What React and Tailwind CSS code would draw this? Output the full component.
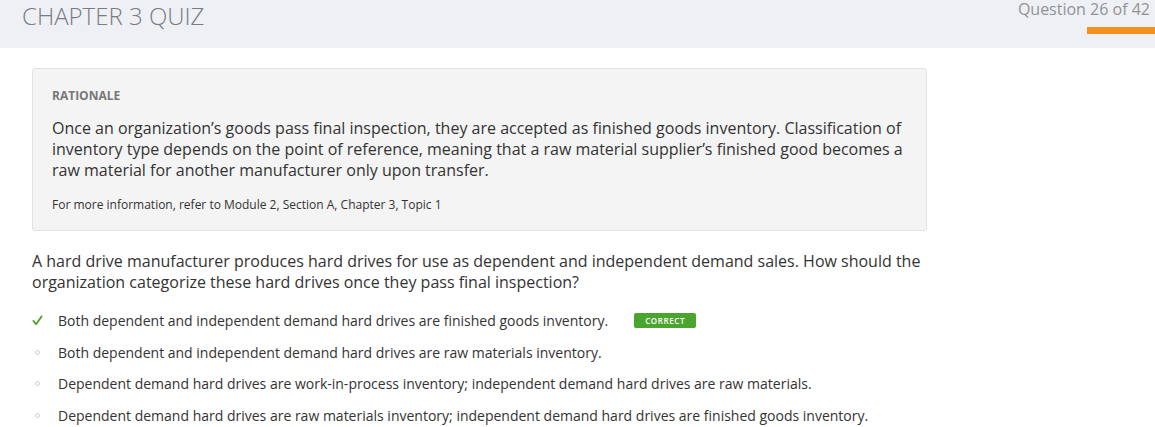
import React from 'react';

const options = [
  { text: 'Both dependent and independent demand hard drives are finished goods inventory.', correct: true },
  { text: 'Both dependent and independent demand hard drives are raw materials inventory.' },
  { text: 'Dependent demand hard drives are work-in-process inventory; independent demand hard drives are raw materials.' },
  { text: 'Dependent demand hard drives are raw materials inventory; independent demand hard drives are finished goods inventory.' },
];

function CheckIcon() {
  return (
    <svg className="w-[11px] h-[11px]" viewBox="0 0 12 12" fill="none">
      <path d="M1.5 6.5l3 3.5L10.5 1.5" stroke="#5aa02c" strokeWidth="2" strokeLinecap="round" strokeLinejoin="round" />
    </svg>
  );
}

export default function App() {
  return (
    <div className="w-[1155px] h-[427px] overflow-hidden bg-white text-[#333] font-['Open_Sans',sans-serif]">
      {/* Header */}
      <div className="h-[48px] bg-[#eff0f4] flex justify-between">
        <h1 className="pl-[22px] pt-[1px] text-[24px] leading-[29px] font-light text-[#777b83]">CHAPTER 3 QUIZ</h1>
        <div className="flex flex-col items-end">
          <div className="pr-[5px] text-[16px] leading-[18px] text-[#8f939a]">Question 26 of 42</div>
          <div className="mt-[9px] w-[68px] h-[7px] bg-[#f39020]" />
        </div>
      </div>

      <div className="pl-[32px] w-[927px]">
        {/* Rationale */}
        <div className="mt-[20px] bg-[#f4f4f4] border border-[#e2e2e2] rounded-[3px] px-[19px] pt-[19px] pb-[17px]">
          <div className="text-[12px] leading-[16px] font-bold text-[#777]">RATIONALE</div>
          <p className="mt-[14px] text-[16px] leading-[21px] text-[#333]">
            Once an organization’s goods pass final inspection, they are accepted as finished goods inventory. Classification of inventory type depends on the point of reference, meaning that a raw material supplier’s finished good becomes a raw material for another manufacturer only upon transfer.
          </p>
          <div className="mt-[16px] text-[12px] leading-[16px] text-[#333]">
            For more information, refer to Module 2, Section A, Chapter 3, Topic 1
          </div>
        </div>

        {/* Question */}
        <p className="mt-[20px] text-[16px] leading-[21px] text-[#333]">
          A hard drive manufacturer produces hard drives for use as dependent and independent demand sales. How should the organization categorize these hard drives once they pass final inspection?
        </p>

        <ul className="mt-[18px] flex flex-col gap-[12.5px]">
          {options.map((o, i) => (
            <li key={i} className="flex items-center h-[19px]">
              <div className="w-[11px] mr-[15px] flex justify-center">
                {o.correct ? <CheckIcon /> : <div className="w-[5px] h-[5px] rounded-full border border-[#ccc]" />}
              </div>
              <span className="text-[14px] leading-[19px] text-[#333]">{o.text}</span>
              {o.correct && (
                <span className="ml-[26px] px-[11px] h-[15px] leading-[15px] rounded-[2px] bg-[#4aa52e] text-white text-[8px] font-semibold tracking-[0.6px]">
                  CORRECT
                </span>
              )}
            </li>
          ))}
        </ul>
      </div>
    </div>
  );
}
